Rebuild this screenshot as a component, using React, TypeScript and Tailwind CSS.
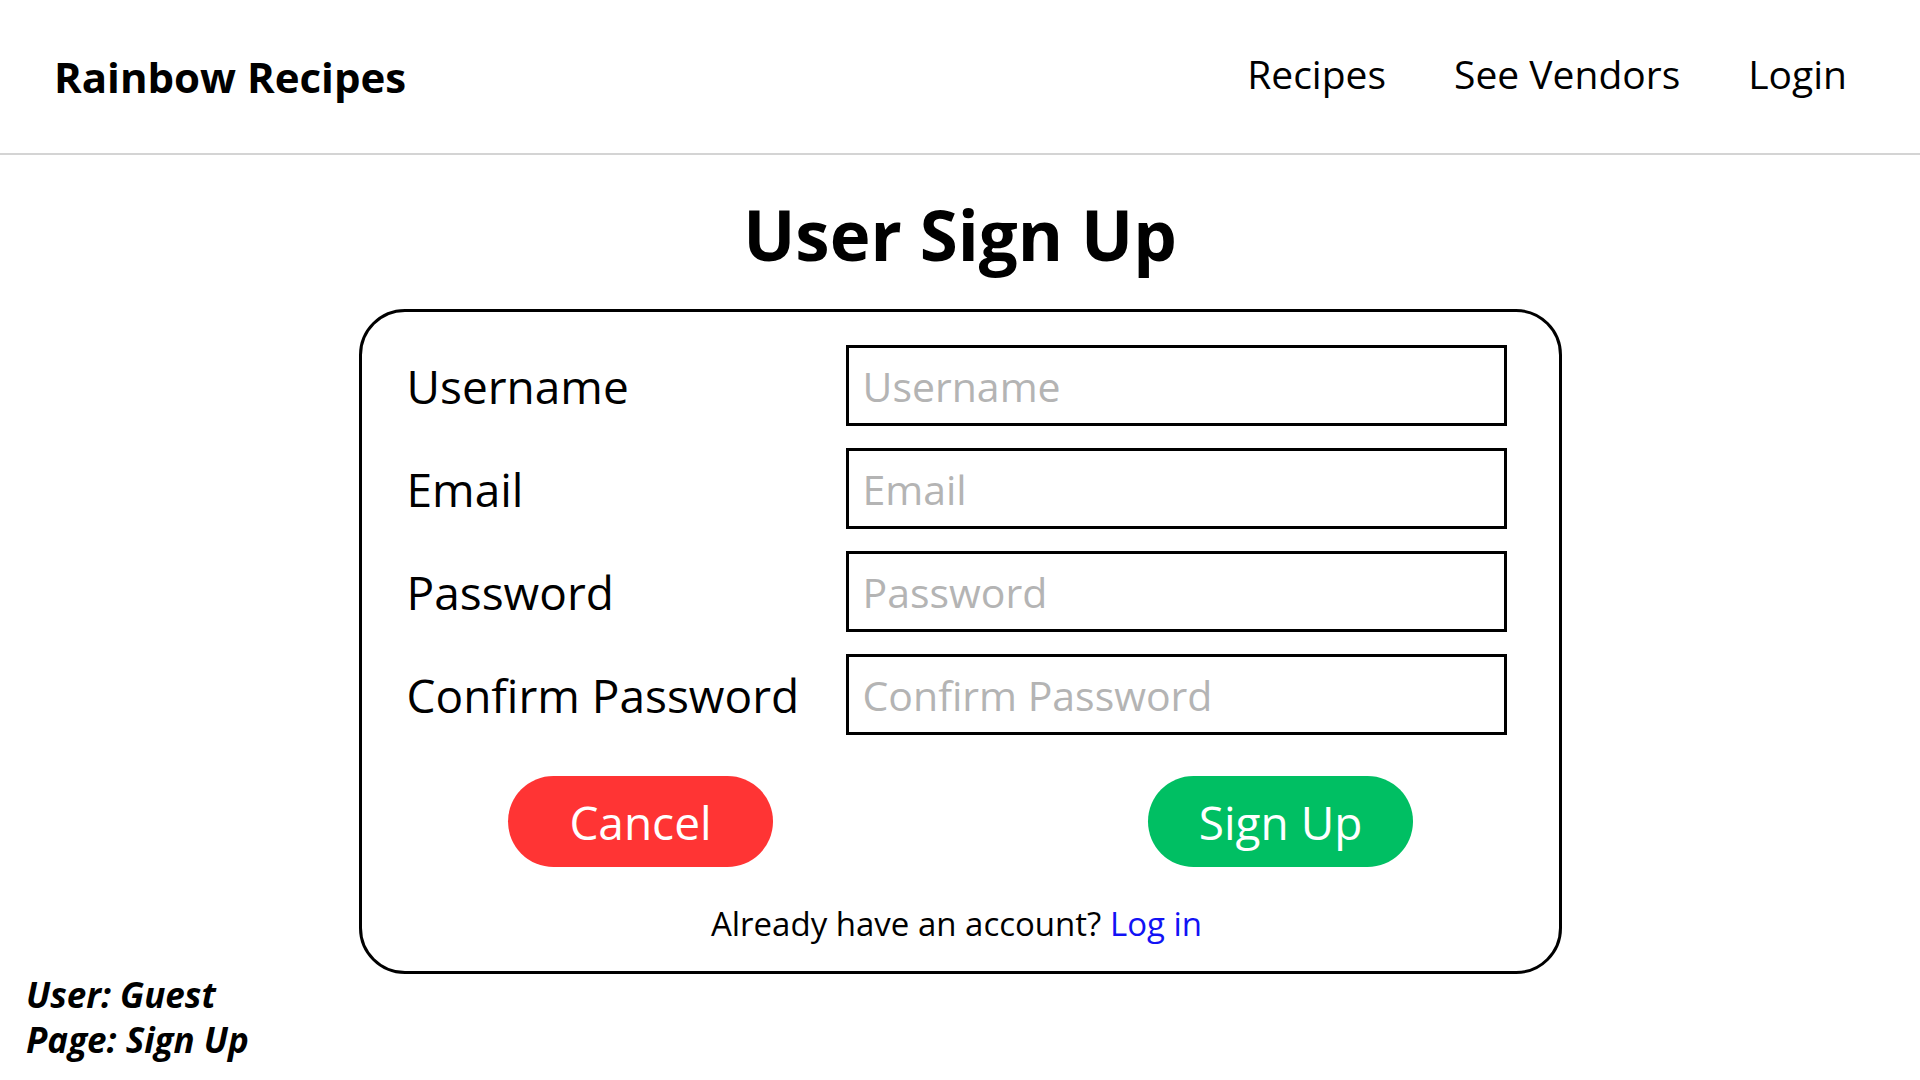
const fields = ["Username", "Email", "Password", "Confirm Password"];

const NavLink = ({ label }: { label: string }) => (
  <a href="#" className="text-[39px] leading-none text-black">
    {label}
  </a>
);

const App = () => {
  return (
    <div className="min-h-screen bg-white font-['Open_Sans',sans-serif] text-black">
      <header className="flex h-[155px] items-center justify-between border-b-2 border-[#d4d4d4] pl-[54px] pr-[73px]">
        <span className="text-[42px] font-bold leading-none">Rainbow Recipes</span>
        <nav className="flex items-center gap-[68px] pb-[6px]">
          <NavLink label="Recipes" />
          <NavLink label="See Vendors" />
          <NavLink label="Login" />
        </nav>
      </header>

      <main className="flex flex-col items-center">
        <h1 className="mt-[45px] text-[69px] font-bold leading-none">User Sign Up</h1>

        <div className="mt-[40px] flex w-[1203px] flex-col rounded-[46px] border-[3px] border-black pb-[31px] pl-[45px] pr-[52px] pt-[33px]">
          <div className="flex flex-col gap-[22px]">
            {fields.map((f) => (
              <div key={f} className="flex h-[81px] items-center">
                <label className="w-[439px] text-[46px] leading-none">{f}</label>
                <input
                  type={f.includes("Password") ? "password" : "text"}
                  placeholder={f}
                  className="h-[81px] w-[661px] border-[3px] border-black px-[14px] text-[41px] outline-none placeholder:text-[#b4b4b4]"
                />
              </div>
            ))}
          </div>

          <div className="mt-[41px] flex justify-center gap-[375px] pl-[8px]">
            <button className="h-[91px] w-[265px] rounded-full bg-[#ff3434] text-[46px] leading-none text-white">
              Cancel
            </button>
            <button className="h-[91px] w-[265px] rounded-full bg-[#00bf63] text-[46px] leading-none text-white">
              Sign Up
            </button>
          </div>

          <p className="mt-[40px] text-center text-[33px] leading-none">
            Already have an account?{" "}
            <a href="#" className="text-[#1212f5]">
              Log in
            </a>
          </p>
        </div>
      </main>

      <div className="-mt-[2px] pl-[26px] text-[35px] font-bold italic leading-[45px]">
        <div>User: Guest</div>
        <div>Page: Sign Up</div>
      </div>
    </div>
  );
};

export default App;
